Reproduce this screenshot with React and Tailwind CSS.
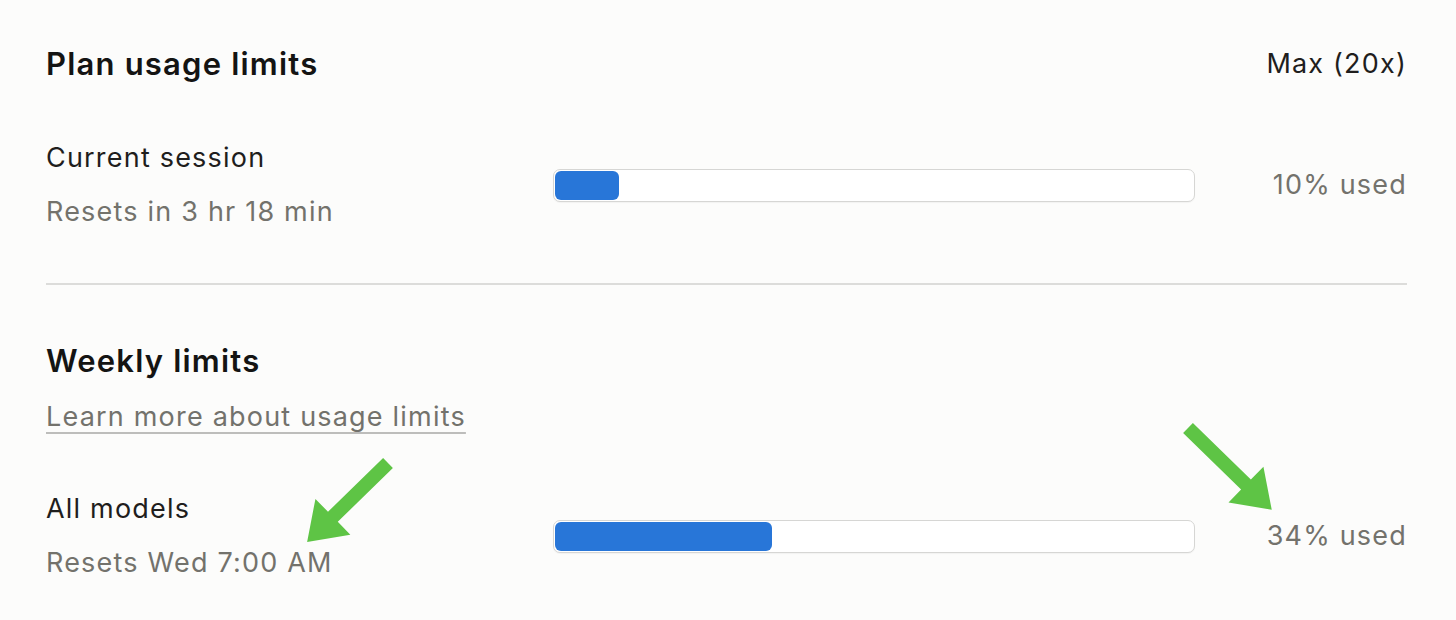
import React from "react";

const body = "text-[27px] leading-[34px] tracking-[1.2px]";

function UsageRow({ label, reset, pct }) {
  return (
    <div className="grid grid-cols-[507px_642px_1fr] items-center">
      <div className="flex flex-col gap-[20px]">
        <p className={`${body} text-[#1f1e1d]`}>{label}</p>
        <p className={`${body} text-[#73726c]`}>{reset}</p>
      </div>
      <div className="h-[33px] rounded-[7px] border border-[#d6d6d4] bg-white p-px shadow-[0_1px_1px_rgba(0,0,0,0.04)]">
        <div
          className="h-full rounded-[6px] bg-[#2876d8]"
          style={{ width: `${pct}%` }}
        />
      </div>
      <p className={`${body} text-right text-[#73726c]`}>{pct}% used</p>
    </div>
  );
}

function Arrow({ x, y, angle, len = 113 }) {
  const h = len - 36;
  return (
    <g transform={`translate(${x} ${y}) rotate(${angle})`}>
      <polygon
        points={`0,-7 ${h},-7 ${h},-25 ${len},0 ${h},25 ${h},7 0,7`}
        fill="#5ec445"
      />
    </g>
  );
}

export default function App() {
  return (
    <div
      className="relative min-h-[620px] w-full bg-[#fcfcfb] pl-[46px] pr-[49px] pt-[44px]"
      style={{ fontFamily: "Inter, 'Noto Sans', sans-serif" }}
    >
      {/* header */}
      <div className="flex items-center justify-between">
        <h1 className="text-[31px] font-semibold leading-[40px] tracking-[1.2px] text-[#141413]">
          Plan usage limits
        </h1>
        <span className={`${body} text-[#1f1e1d]`}>Max (20x)</span>
      </div>

      <div className="mt-[57px]">
        <UsageRow label="Current session" reset="Resets in 3 hr 18 min" pct={10} />
      </div>

      <div className="mt-[54px] h-[2px] bg-[#dcdcda]" />

      {/* weekly */}
      <h2 className="mt-[56px] text-[31px] font-semibold leading-[40px] tracking-[1.2px] text-[#141413]">
        Weekly limits
      </h2>
      <a
        href="#"
        className={`${body} mt-[19px] inline-block text-[#73726c] underline decoration-[#bdbdbb] decoration-2 underline-offset-[6px]`}
      >
        Learn more about usage limits
      </a>

      <div className="mt-[58px]">
        <UsageRow label="All models" reset="Resets Wed 7:00 AM" pct={34} />
      </div>

      {/* annotation arrows */}
      <svg
        className="pointer-events-none absolute left-0 top-0"
        width="1456"
        height="620"
        viewBox="0 0 1456 620"
      >
        <Arrow x={388} y={463} angle={135.7} />
        <Arrow x={1188} y={428} angle={44.3} len={117} />
      </svg>
    </div>
  );
}
